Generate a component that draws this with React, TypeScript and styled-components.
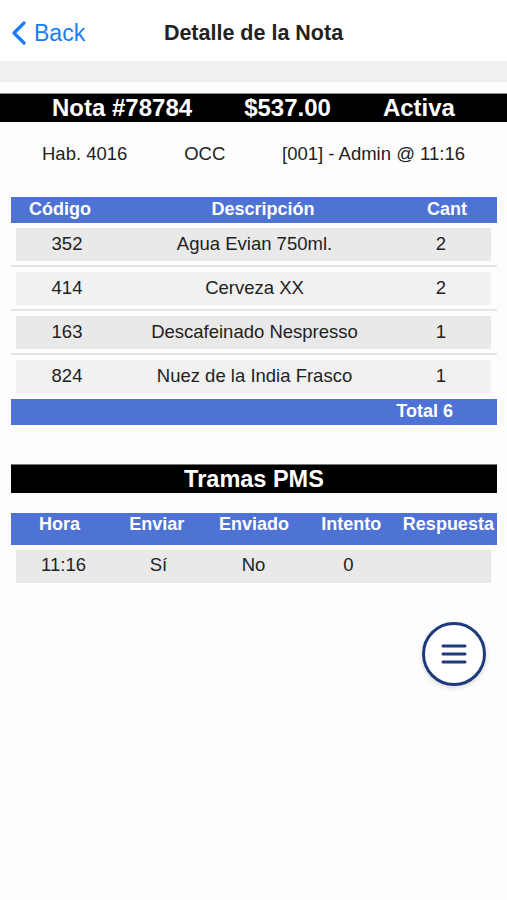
import { createGlobalStyle, styled } from 'styled-components';

const items = [
  { code: '352', desc: 'Agua Evian 750ml.', qty: 2 },
  { code: '414', desc: 'Cerveza XX', qty: 2 },
  { code: '163', desc: 'Descafeinado Nespresso', qty: 1 },
  { code: '824', desc: 'Nuez de la India Frasco', qty: 1 },
];

const tramas = [{ hora: '11:16', enviar: 'Sí', enviado: 'No', intento: '0', respuesta: '' }];

const App = () => {
  const total = items.reduce((sum, it) => sum + it.qty, 0);

  return (
    <>
      <GlobalStyle />
      <Screen>
        <NavBar>
          <BackButton>
            <svg width="17" height="24" viewBox="0 0 17 24">
              <path d="M14 2 L4 12 L14 22" fill="none" stroke="#1a7cf6" strokeWidth="3.2" strokeLinecap="round" strokeLinejoin="round" />
            </svg>
            <span>Back</span>
          </BackButton>
          <NavTitle>Detalle de la Nota</NavTitle>
        </NavBar>
        <GrayBand />

        <NoteBar>
          <span>Nota #78784</span>
          <span>$537.00</span>
          <span>Activa</span>
        </NoteBar>
        <InfoRow>
          <span>Hab. 4016</span>
          <span>OCC</span>
          <span>[001] - Admin @ 11:16</span>
        </InfoRow>

        <Section>
          <ItemsHeader>
            <span>Código</span>
            <HeadDesc>Descripción</HeadDesc>
            <span>Cant</span>
          </ItemsHeader>
          {items.map((it, i) => (
            <Cell key={it.code} $divider={i < items.length - 1}>
              <ItemBox $alt={i % 2 === 1}>
                <span>{it.code}</span>
                <span>{it.desc}</span>
                <span>{it.qty}</span>
              </ItemBox>
            </Cell>
          ))}
          <TotalBar>Total {total}</TotalBar>
        </Section>

        <TramasSection>
          <TitleBar>Tramas PMS</TitleBar>
          <TramasHeader>
            <span>Hora</span>
            <span>Enviar</span>
            <span>Enviado</span>
            <span>Intento</span>
            <span>Respuesta</span>
          </TramasHeader>
          {tramas.map((t, i) => (
            <Cell key={t.hora} $divider={false}>
              <TramaBox $alt={i % 2 === 1}>
                <span>{t.hora}</span>
                <span>{t.enviar}</span>
                <span>{t.enviado}</span>
                <span>{t.intento}</span>
                <span>{t.respuesta}</span>
              </TramaBox>
            </Cell>
          ))}
        </TramasSection>

        <FabRow>
          <MenuFab aria-label="menu">
            <svg width="26" height="22" viewBox="0 0 26 22">
              <path d="M2 3 H24 M2 11 H24 M2 19 H24" stroke="#1f3a7c" strokeWidth="3" strokeLinecap="round" />
            </svg>
          </MenuFab>
        </FabRow>
      </Screen>
    </>
  );
};

const GlobalStyle = createGlobalStyle`
  html, body {
    margin: 0;
    padding: 0;
    background: #fdfdfd;
  }
  body {
    font-family: 'Liberation Sans', Arial, sans-serif;
    color: #1c1c1c;
  }
`;

const Screen = styled.div`
  width: 507px;
  min-height: 900px;
  background: #fdfdfd;
  display: flex;
  flex-direction: column;
`;

const NavBar = styled.div`
  position: relative;
  height: 61px;
  background: #ffffff;
  display: flex;
  align-items: center;
  justify-content: center;
`;

const BackButton = styled.div`
  position: absolute;
  left: 10px;
  top: 21px;
  display: flex;
  align-items: center;
  gap: 7px;
  color: #1a7cf6;
  font-size: 23px;
  span {
    line-height: 24px;
  }
`;

const NavTitle = styled.div`
  font-size: 21.5px;
  font-weight: 700;
  color: #222;
  margin-top: 6px;
`;

const GrayBand = styled.div`
  height: 21px;
  background: #f0f0f0;
`;

const NoteBar = styled.div`
  margin-top: 11px;
  height: 28px;
  background: #000;
  border-top: 1px solid #8a8a8a;
  display: flex;
  align-items: center;
  justify-content: space-evenly;
  color: #fff;
  font-size: 24px;
  font-weight: 700;
`;

const InfoRow = styled.div`
  height: 64px;
  display: flex;
  align-items: center;
  justify-content: space-between;
  padding: 0 42px;
  font-size: 18.5px;
  color: #222;
`;

const Section = styled.div`
  margin: 11px 10px 0 11px;
  display: flex;
  flex-direction: column;
`;

const BlueHeader = styled.div`
  background: #4f72d5;
  color: #fff;
  font-weight: 700;
  font-size: 18px;
  display: grid;
  align-items: center;
  text-align: center;
  box-sizing: border-box;
`;

const ItemsHeader = styled(BlueHeader)`
  height: 26px;
  grid-template-columns: 98px 1fr 100px;
  padding-bottom: 2px;
`;

const HeadDesc = styled.span`
  padding-left: 20px;
`;

const Cell = styled.div<{ $divider: boolean }>`
  height: 44px;
  box-sizing: border-box;
  padding: 5px 6px 0 5px;
  border-bottom: 2px solid ${p => (p.$divider ? '#e4e4e4' : 'transparent')};
`;

const RowBox = styled.div<{ $alt: boolean }>`
  height: 33px;
  box-sizing: border-box;
  background: ${p => (p.$alt ? '#f1f1f1' : '#e9e9e9')};
  display: grid;
  align-items: center;
  text-align: center;
  font-size: 18.5px;
  color: #222;
`;

const ItemBox = styled(RowBox)`
  grid-template-columns: 102px 1fr 100px;
  padding-bottom: 1px;
`;

const TotalBar = styled.div`
  height: 26px;
  background: #4f72d5;
  color: #fff;
  font-weight: 700;
  font-size: 18px;
  display: flex;
  align-items: center;
  justify-content: flex-end;
  padding-right: 44px;
  padding-bottom: 2px;
  box-sizing: border-box;
`;

const TramasSection = styled(Section)`
  margin-top: 39px;
`;

const TitleBar = styled.div`
  height: 29px;
  background: #000;
  color: #fff;
  font-size: 23.5px;
  font-weight: 700;
  display: flex;
  align-items: center;
  justify-content: center;
  border-top: 1px solid #777;
  box-sizing: border-box;
`;

const TramasHeader = styled(BlueHeader)`
  margin-top: 20px;
  height: 32px;
  padding-bottom: 9px;
  grid-template-columns: repeat(5, 1fr);
  white-space: nowrap;
`;

const TramaBox = styled(RowBox)`
  grid-template-columns: repeat(5, 1fr);
  padding-bottom: 3px;
`;

const FabRow = styled.div`
  display: flex;
  justify-content: flex-end;
  padding: 33px 21px 0 0;
`;

const MenuFab = styled.button`
  width: 64px;
  height: 64px;
  border-radius: 50%;
  border: 3px solid #1f3a7c;
  background: #fff;
  box-sizing: border-box;
  display: flex;
  align-items: center;
  justify-content: center;
  padding: 0;
  box-shadow: 0 2px 5px rgba(0, 0, 0, 0.15);
`;

export default App;
